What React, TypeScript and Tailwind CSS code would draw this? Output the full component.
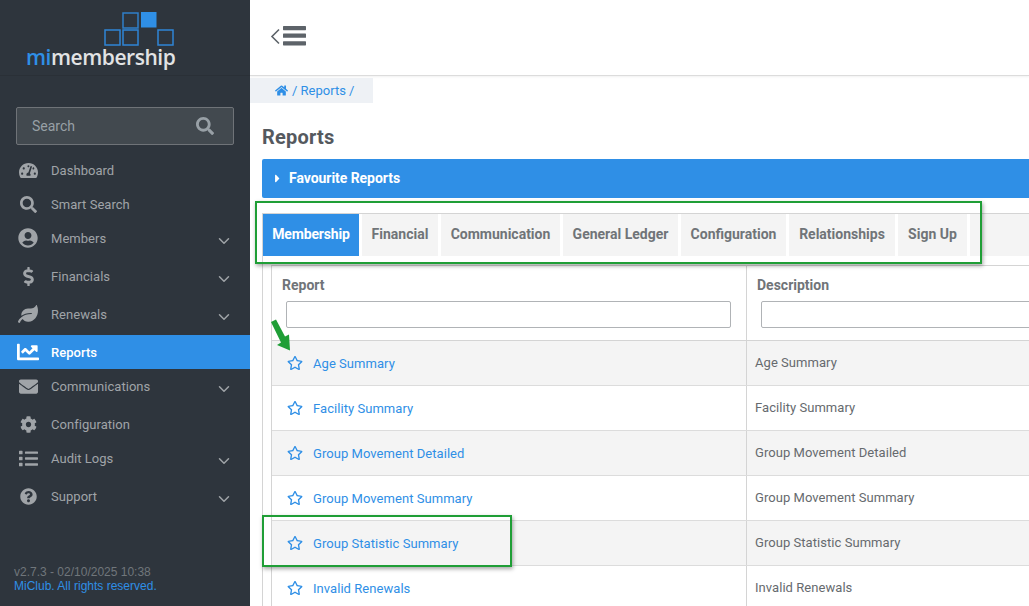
import React from "react";
import {
  FaTachometerAlt, FaSearch, FaUserCircle, FaDollarSign, FaLeaf, FaChartLine, FaEnvelope, FaCog, FaList,
  FaQuestionCircle, FaHome, FaRegStar, FaCaretRight,
} from "react-icons/fa";
import { ChevronDown } from "lucide-react";

type Item = { label: string; icon: React.ReactNode; sub?: boolean; active?: boolean };

const items: Item[] = [
  { label: "Dashboard", icon: <FaTachometerAlt size={19} /> },
  { label: "Smart Search", icon: <FaSearch size={17} /> },
  { label: "Members", icon: <FaUserCircle size={20} />, sub: true },
  { label: "Financials", icon: <FaDollarSign size={19} />, sub: true },
  { label: "Renewals", icon: <FaLeaf size={20} />, sub: true },
  { label: "Reports", icon: <FaChartLine size={22} />, active: true },
  { label: "Communications", icon: <FaEnvelope size={19} />, sub: true },
  { label: "Configuration", icon: <FaCog size={17} /> },
  { label: "Audit Logs", icon: <FaList size={19} />, sub: true },
  { label: "Support", icon: <FaQuestionCircle size={17} />, sub: true },
];

const tabs: [string, string][] = [
  ["Financial", "w-[76px]"],
  ["Communication", "w-[119px]"],
  ["General Ledger", "w-[115px]"],
  ["Configuration", "w-[105px]"],
  ["Relationships", "w-[106px]"],
  ["Sign Up", "w-[69px]"],
];

const rows = [
  "Age Summary",
  "Facility Summary",
  "Group Movement Detailed",
  "Group Movement Summary",
  "Group Statistic Summary",
  "Invalid Renewals",
];

function Sidebar() {
  return (
    <aside className="w-[250px] h-[606px] shrink-0 bg-[#2e353d] flex flex-col font-['Roboto',sans-serif]">
      <div className="h-[76px] shrink-0 border-b border-[#2a3037] relative">
        <svg className="absolute left-[104px] top-[11px]" width="70" height="35" viewBox="0 0 70 35" fill="none">
          <rect x="19" y="2" width="15" height="15" stroke="#2f7fc9" strokeWidth="1.5" />
          <rect x="37" y="1" width="15.5" height="15.5" fill="#2f8fe6" />
          <rect x="1" y="19" width="15" height="15" stroke="#2f85d6" strokeWidth="1.5" />
          <rect x="19" y="19" width="15" height="15" stroke="#2f85d6" strokeWidth="1.5" />
          <rect x="54" y="19" width="15" height="15" stroke="#2f85d6" strokeWidth="1.5" />
        </svg>
        <div className="absolute left-[26px] top-[43px] text-[21px] leading-[28px] font-semibold font-['Open_Sans',sans-serif] text-[#e2e3e4] tracking-[-0.45px]">
          <span className="text-[#2f8fe6]">mi</span>membership
        </div>
      </div>
      <div className="mx-4 mt-[31px] mb-2 h-[38px] flex items-center justify-between pl-[15px] pr-[19px] bg-[#42494f] border border-[#6f7378] rounded-[2px] text-[#98a0a6]">
        <span className="text-[14px]">Search</span>
        <FaSearch size={18} />
      </div>
      <nav className="flex flex-col">
        {items.map((it) => (
          <div
            key={it.label}
            className={`flex ${it.sub ? "h-[38px]" : "h-[34px]"} ${it.active ? "bg-[#2f8fe6] text-white font-medium" : "text-[#a0a4a8]"}`}
          >
            <div className="w-[51px] h-[34px] pl-[17px] flex items-center shrink-0">
              <span className="w-[22px] flex justify-center">{it.icon}</span>
            </div>
            <span className="h-[34px] flex items-center text-[13px] tracking-[0.04px] leading-none">{it.label}</span>
            {it.sub && <ChevronDown size={18} strokeWidth={2} className="ml-auto mr-[17px] mt-[11px] text-[#a0a4a8]" />}
          </div>
        ))}
      </nav>
      <div className="mt-auto pb-[13px] pl-[14px] text-[12px] leading-[14px] font-['Liberation_Sans',sans-serif]">
        <div className="text-[#70767b]">v2.7.3 - 02/10/2025 10:38</div>
        <div className="text-[#2f8fe6]">MiClub. All rights reserved.</div>
      </div>
    </aside>
  );
}

function Main() {
  return (
    <main className="flex-1 min-w-0 h-[606px] overflow-hidden bg-white font-['Roboto',sans-serif]">
      <header className="h-[76px] border-b border-[#dcdcdc] shadow-[0_1px_2px_rgba(0,0,0,0.06)] flex items-center pl-[20px] pb-[3px]">
        <svg width="37" height="20" viewBox="0 0 37 20" className="text-[#5d6369]">
          <path d="M9 3.5 L2 10.5 L9 17.5" fill="none" stroke="currentColor" strokeWidth="1.6" />
          <rect x="13" y="0" width="23" height="4.2" rx="0.6" fill="currentColor" />
          <rect x="13" y="7.6" width="23" height="4.2" rx="0.6" fill="currentColor" />
          <rect x="13" y="15.2" width="23" height="4.2" rx="0.6" fill="currentColor" />
        </svg>
      </header>
      <div className="mt-[2px] w-[123px] h-[25px] bg-[#eef1f5] flex items-center pl-[25px] gap-[4px] text-[#2f8fe6]">
        <FaHome size={13} />
        <span className="text-[13px] whitespace-nowrap">/ Reports /</span>
      </div>
      <div className="pl-3">
        <h1 className="mt-[21px] h-[35px] text-[20px] tracking-[0.2px] leading-[26px] font-bold text-[#55595e]">Reports</h1>
        <div className="h-[39px] bg-[#2f8fe6] rounded-l-[2px] flex items-center pl-[9px] gap-[5px] text-white font-bold text-[14px] tracking-[-0.05px]">
          <FaCaretRight size={13} />
          Favourite Reports
        </div>
        <div className="mt-[15px] border-t border-l border-[#d4d4d4]">
          <div className="flex gap-[3px] h-[42px] w-[767px]">
            <div className="w-[96px] bg-[#2f8fe6] text-white font-bold text-[14px] tracking-[-0.15px] pb-[1px] flex items-center justify-center">Membership</div>
            {tabs.map(([t, w]) => (
              <div key={t} className={`${w} bg-[#f4f4f4] text-[#707478] font-bold text-[14px] pb-[1px] flex items-center justify-center`}>{t}</div>
            ))}
            <div className="flex-1 bg-[#f4f4f4]" />
          </div>
          <div className="ml-[8px] mt-[9px] border-t border-l border-[#d4d4d4]">
            <div className="flex h-[75px] border-b border-[#d4d4d4]">
              <div className="w-[475px] shrink-0 border-r border-[#d4d4d4] pt-[10px] pl-[10px] pr-[15px]">
                <div className="text-[14px] leading-[18px] font-bold text-[#707478]">Report</div>
                <div className="mt-[7px] ml-[4px] h-[27px] border border-[#b0b3b6] rounded-[2px] bg-white" />
              </div>
              <div className="w-[600px] shrink-0 pt-[10px] pl-[10px]">
                <div className="text-[14px] leading-[18px] font-bold text-[#707478]">Description</div>
                <div className="mt-[7px] ml-[4px] h-[27px] border border-[#b0b3b6] rounded-[2px] bg-white" />
              </div>
            </div>
            {rows.map((r, i) => (
              <div key={r} className={`flex h-[45px] border-b border-[#dcdcdc] ${i % 2 === 0 ? "bg-[#f4f4f4]" : "bg-white"}`}>
                <div className="w-[475px] shrink-0 border-r border-[#d4d4d4] flex items-center pl-[15px] gap-[10px] text-[#2f8fe6] text-[13px] tracking-[0.05px]">
                  <FaRegStar size={16} />
                  <span className="pt-[1px]">{r}</span>
                </div>
                <div className="flex items-center pl-[8px] pb-[1px] text-[13px] tracking-[0.05px] text-[#666a6e]">{r}</div>
              </div>
            ))}
          </div>
        </div>
      </div>
    </main>
  );
}

export default function App() {
  return (
    <div className="relative w-[1029px] h-[606px] overflow-hidden flex">
      <Sidebar />
      <Main />
      <div className="absolute left-[255px] top-[201px] w-[727px] h-[63px] border-2 border-[#1f9e36] shadow-[1px_2px_4px_rgba(0,0,0,0.35)]" />
      <div className="absolute left-[262px] top-[515px] w-[250px] h-[52px] border-2 border-[#1f9e36] shadow-[1px_2px_4px_rgba(0,0,0,0.35)]" />
      <svg className="absolute left-[268px] top-[318px]" width="26" height="36" viewBox="0 0 26 36">
        <path d="M3 4 L8 1.5 L17 18.5 L21 16.5 L22 32.5 L9 27 L13 24.5 Z" fill="#1f9e36" />
      </svg>
    </div>
  );
}
